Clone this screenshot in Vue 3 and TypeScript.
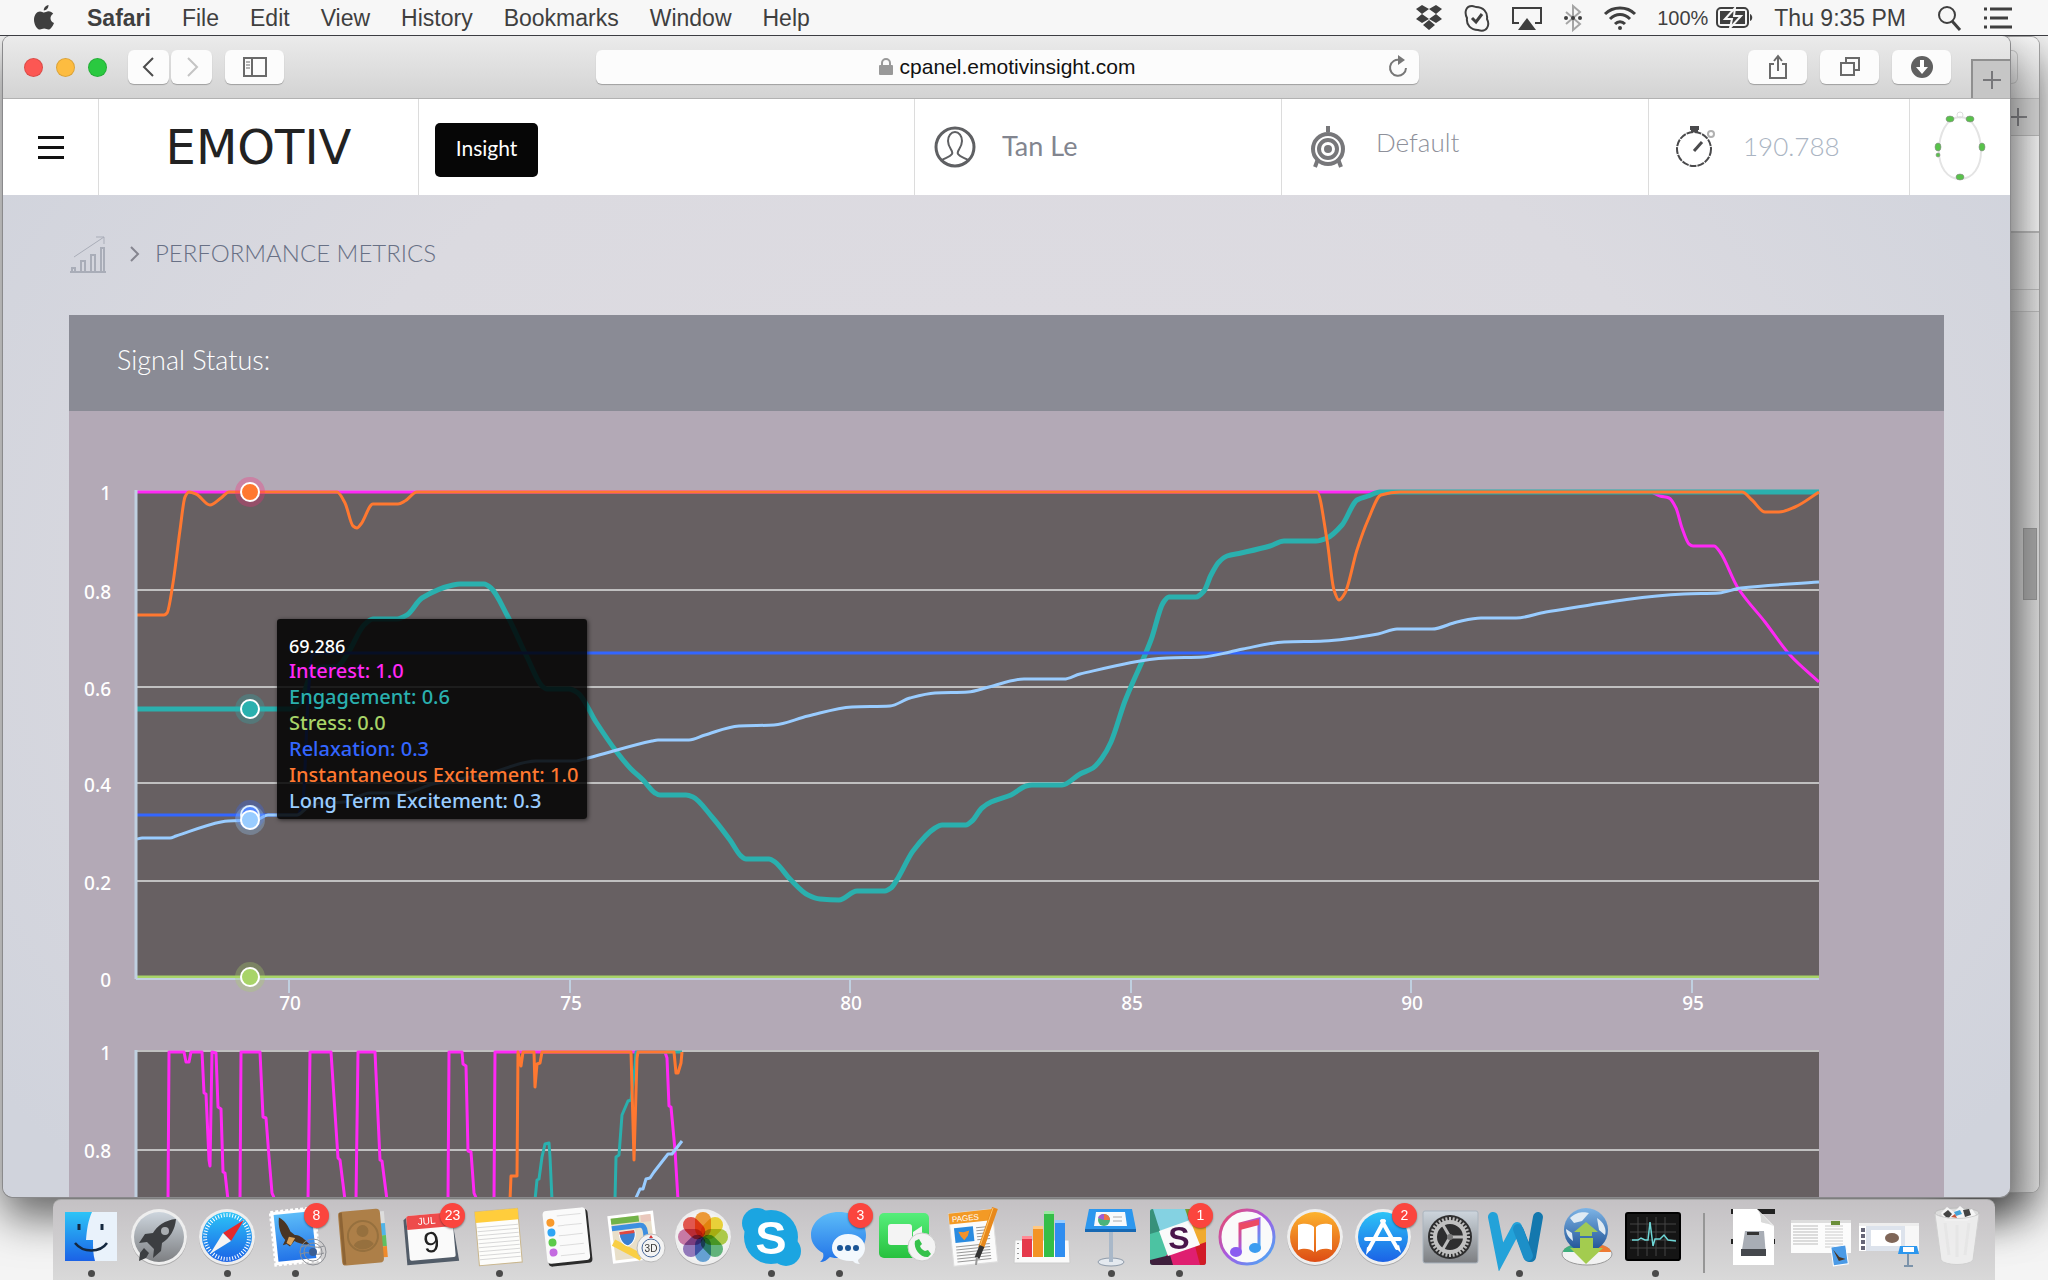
<script setup lang="ts">
type Point = [number, number]

interface DockItem {
  name: string
  art: string
  badge?: number
  running?: boolean
}

const menus = ['File', 'Edit', 'View', 'History', 'Bookmarks', 'Window', 'Help']

const readings = [
  { label: 'Interest', value: '1.0', color: '#ff28f5' },
  { label: 'Engagement', value: '0.6', color: '#2ab0ae' },
  { label: 'Stress', value: '0.0', color: '#a8d468' },
  { label: 'Relaxation', value: '0.3', color: '#3366ff' },
  { label: 'Instantaneous Excitement', value: '1.0', color: '#ff7830' },
  { label: 'Long Term Excitement', value: '0.3', color: '#99ccff' },
]

const gridLabels = [
  { text: '1', y: 491 },
  { text: '0.8', y: 590 },
  { text: '0.6', y: 687 },
  { text: '0.4', y: 783 },
  { text: '0.2', y: 881 },
  { text: '0', y: 978 },
]

const ticks = [
  { text: '70', x: 289 },
  { text: '75', x: 570 },
  { text: '80', x: 850 },
  { text: '85', x: 1131 },
  { text: '90', x: 1411 },
  { text: '95', x: 1692 },
]

const interest: Point[] = [
  [137, 492], [1650, 492], [1660, 496], [1669, 498], [1676, 508], [1682, 528], [1689, 544], [1693, 546],
  [1714, 546], [1720, 552], [1738, 588], [1765, 622], [1790, 655], [1819, 682],
]

const engagement: Point[] = [
  [137, 709], [290, 709], [300, 703], [312, 672], [324, 667], [336, 667], [348, 653], [364, 625], [373, 619],
  [397, 619], [407, 615], [422, 598], [453, 585], [460, 584], [484, 584], [491, 588], [507, 615], [527, 657],
  [542, 686], [547, 689], [569, 689], [578, 693], [596, 722], [616, 751], [631, 769], [643, 780], [655, 793],
  [660, 795], [686, 795], [693, 797], [712, 817], [730, 840], [741, 856], [746, 859], [769, 859], [775, 862],
  [790, 879], [808, 895], [820, 899], [839, 900], [857, 891], [885, 891], [891, 888], [898, 878], [913, 851],
  [935, 828], [942, 825], [966, 825], [972, 821], [982, 808], [991, 802], [1011, 795], [1026, 786], [1032, 785],
  [1062, 785], [1080, 774], [1093, 768], [1102, 758], [1111, 742], [1125, 701], [1151, 640], [1163, 603],
  [1169, 597], [1196, 597], [1204, 591], [1211, 575], [1219, 562], [1227, 556], [1241, 553], [1270, 546],
  [1284, 541], [1290, 541], [1316, 541], [1327, 538], [1342, 525], [1357, 500], [1368, 496], [1380, 492], [1819, 492],
]

const relaxation: Point[] = [
  [137, 815], [297, 815], [303, 800], [308, 700], [312, 655], [318, 653], [1819, 653],
]

const instant: Point[] = [
  [137, 615], [164, 615], [167, 613], [173, 583], [180, 530], [185, 497], [189, 492], [196, 494], [210, 505],
  [221, 498], [229, 492], [337, 492], [345, 503], [353, 526], [357, 528], [361, 524], [373, 504], [398, 504],
  [405, 501], [417, 492], [1317, 492], [1327, 540], [1334, 590], [1339, 600], [1345, 593], [1357, 550],
  [1368, 520], [1381, 495], [1400, 492], [1742, 492], [1752, 500], [1765, 512], [1779, 512], [1795, 507], [1819, 492],
]

const longTerm: Point[] = [
  [137, 839], [142, 838], [170, 838], [176, 836], [221, 822], [228, 821], [256, 820], [268, 815], [297, 815],
  [308, 807], [321, 803], [344, 802], [370, 793], [404, 793], [433, 784], [487, 774], [536, 761], [544, 761],
  [575, 761], [588, 758], [652, 741], [658, 740], [689, 740], [705, 735], [739, 726], [774, 725], [808, 716],
  [852, 707], [890, 706], [910, 698], [935, 693], [968, 692], [989, 687], [1024, 679], [1064, 679], [1080, 674],
  [1167, 658], [1203, 657], [1230, 652], [1243, 649], [1284, 642], [1324, 641], [1378, 634], [1397, 629],
  [1432, 629], [1457, 622], [1481, 618], [1516, 618], [1546, 612], [1684, 594], [1719, 593], [1741, 588], [1819, 582],
]

// Monotone cubic interpolation: smooth curves that keep the flat runs flat.
function smooth(points: Point[]): string {
  const n = points.length
  const slope: number[] = []
  for (let i = 0; i < n - 1; i++) {
    slope.push((points[i + 1][1] - points[i][1]) / (points[i + 1][0] - points[i][0]))
  }
  const tangent = points.map((_, i) => {
    if (i === 0) return slope[0]
    if (i === n - 1) return slope[n - 2]
    const a = slope[i - 1]
    const b = slope[i]
    return a * b <= 0 ? 0 : (2 * a * b) / (a + b)
  })
  let d = `M${points[0][0]},${points[0][1]}`
  for (let i = 0; i < n - 1; i++) {
    const [x0, y0] = points[i]
    const [x1, y1] = points[i + 1]
    const h = (x1 - x0) / 3
    d += `C${x0 + h},${y0 + tangent[i] * h} ${x1 - h},${y1 - tangent[i + 1] * h} ${x1},${y1}`
  }
  return d
}

const series = [
  { color: '#ff28f5', width: 3, d: smooth(interest) },
  { color: '#2ab0ae', width: 5, d: smooth(engagement) },
  { color: '#a8d468', width: 3, d: 'M137,977H1819' },
  { color: '#3366ff', width: 3, d: smooth(relaxation) },
  { color: '#ff7830', width: 3, d: smooth(instant) },
  { color: '#99ccff', width: 3, d: smooth(longTerm) },
]

const markers = [
  { y: 492, color: '#ff7830', halo: '#ff287a' },
  { y: 709, color: '#2ab0ae', halo: '#2ab0ae' },
  { y: 977, color: '#a8d468', halo: '#a8d468' },
  { y: 815, color: '#3366ff', halo: '#3366ff' },
  { y: 820, color: '#99ccff', halo: '#99ccff' },
]

const overview = [
  {
    color: '#ff28f5',
    lines: [
      '168,1200 169,1052 184,1052 186,1062 189,1062 191,1052 202,1052 204,1093 206,1094 209,1160 210,1166 212,1052 216,1053 218,1107 221,1109 223,1172 225,1173 228,1200',
      '240,1200 241,1052 260,1052 263,1117 266,1118 269,1157 272,1193 275,1200',
      '308,1200 310,1052 331,1052 338,1158 340,1160 345,1200',
      '356,1200 358,1052 375,1052 380,1160 382,1161 387,1200',
      '448,1200 449,1052 462,1052 463,1064 466,1066 468,1151 471,1152 474,1193 477,1200',
      '494,1200 495,1052 665,1052 667,1058 669,1106 671,1107 675,1150 678,1200',
    ],
  },
  {
    color: '#2ab0ae',
    lines: [
      '535,1200 537,1180 539,1179 542,1157 545,1144 549,1143 550,1157 552,1200',
      '615,1200 616,1157 619,1155 622,1115 628,1101 631,1100 635,1067 636,1052 682,1052',
    ],
  },
  {
    color: '#ff7830',
    lines: [
      '510,1200 511,1176 517,1176 518,1052 521,1066 523,1052 534,1052 535,1087 537,1064 540,1063 542,1052 631,1052 634,1160 637,1058 638,1052 674,1052 676,1073 678,1073 681,1063 682,1052',
    ],
  },
  {
    color: '#99ccff',
    lines: ['635,1200 640,1189 643,1189 646,1179 650,1178 654,1172 668,1154 672,1154 682,1141'],
  },
]

const disc = (fill: string) =>
  `<circle cx="34" cy="35" r="28" fill="#0003"/><circle cx="34" cy="34" r="28" fill="#eee"/><circle cx="34" cy="34" r="25" fill="${fill}"/>`

const rays = (count: number, from: number, to: number, attrs: string) =>
  Array.from(
    { length: count },
    (_, i) => `<path d="M34 ${from}V${to}" ${attrs} transform="rotate(${(i * 360) / count} 34 34)"/>`,
  ).join('')

const petals = ['#f9a13a', '#f5dc3c', '#b5d44c', '#67bd82', '#6aa9de', '#9a7fc4', '#d27fae', '#ee5b52']
  .map((c, i) => `<rect x="26" y="9" width="16" height="25" rx="8" fill="${c}" style="mix-blend-mode:multiply" transform="rotate(${i * 45} 34 34)"/>`)
  .join('')

const ruled = (x: number, y: number, w: number, n: number, gap: number, color: string) =>
  Array.from({ length: n }, (_, i) => `<path d="M${x} ${y + i * gap}h${w}" stroke="${color}"/>`).join('')

const eagle =
  '<path d="M20 13c6 4 8 9 10 15l4 4c5 0 9 5 14 11-7 0-12-3-15-5l-5 5-3-3-4 1 3-5c-4-5-6-13-4-23z" fill="#4a3523"/><path d="M28 33l6 2-5 7-4-3z" fill="#dba35c"/>'

const dockApps: DockItem[] = [
  {
    name: 'Finder',
    running: true,
    art: '<rect x="8" y="9" width="52" height="49" fill="#e9f2fb"/><path d="M8 9h27c-4 9-5 17-6 28h7c0 8 0 14 2 21H8z" fill="url(#blue)"/><path d="M22 21v6M45 21v6" stroke="#14283f" stroke-width="3"/><path d="M18 40c8 10 25 10 32 0" fill="none" stroke="#14283f" stroke-width="2.5"/>',
  },
  {
    name: 'Launchpad',
    art: disc('url(#steel)') + '<path d="M51 16c-11 1-19 7-23 14l-8 1-6 9 8-1 7 7-1 9 8-7 1-8c8-5 13-13 14-24zM19 45l5 5-3 5-7 3 1-8z" fill="#3c3e41"/><circle cx="40" cy="28" r="4" fill="#a9adb1"/>',
  },
  {
    name: 'Safari',
    running: true,
    art: disc('url(#blue)') + rays(48, 10, 14, 'stroke="#fff"') + '<path d="M51 17L30 30l8 8z" fill="#e5292b"/><path d="M17 51l13-21 8 8z" fill="#f4f4f4"/>',
  },
  {
    name: 'Mail',
    badge: 8,
    running: true,
    art: '<g transform="rotate(-6 34 34)"><rect x="12" y="7" width="44" height="53" fill="#fff" stroke="#fff" stroke-width="3" stroke-dasharray="3 2"/><rect x="15" y="10" width="38" height="47" fill="url(#sky)"/>' + eagle + '</g><g fill="none" stroke="#8d8f94"><circle cx="52" cy="49" r="13"/><circle cx="52" cy="49" r="9"/><path d="M40 44c8-4 14 3 23-1M40 51c8-4 14 3 23-1"/></g><circle cx="52" cy="49" r="4" fill="#3a5e94"/>',
  },
  {
    name: 'Contacts',
    art: '<g transform="rotate(-5 34 34)"><path d="M52 10h5v12h-5z" fill="#ddd"/><path d="M52 22h5v12h-5z" fill="#4fb4e8"/><path d="M52 34h5v11h-5z" fill="#5fbf60"/><path d="M52 45h5v11h-5z" fill="#f08a2a"/><rect x="11" y="7" width="42" height="54" rx="4" fill="#ad7f48"/><path d="M12 8v52h3V8z" fill="#8d6435"/><circle cx="34" cy="33" r="15" fill="none" stroke="#96703e" stroke-width="2"/><circle cx="34" cy="28" r="6" fill="#96703e"/><path d="M24 42c2-7 18-7 20 0-5 6-15 6-20 0z" fill="#96703e"/></g>',
  },
  {
    name: 'Calendar',
    badge: 23,
    art: '<g transform="rotate(-5 34 34)"><path d="M8 15l4-3h44l4 48H8z" fill="#525c68"/><rect x="11" y="11" width="46" height="45" rx="2" fill="#fafafa"/><path d="M11 13a2 2 0 012-2h42a2 2 0 012 2v12H11z" fill="#ee4b4b"/></g><text x="31" y="21" font-size="10" fill="#fff" text-anchor="middle" transform="rotate(-5 34 34)">JUL</text><text x="34" y="49" font-size="29" fill="#222" text-anchor="middle" transform="rotate(-5 34 34)">9</text>',
  },
  {
    name: 'Notes',
    running: true,
    art: '<g transform="rotate(-5 34 34)"><rect x="12" y="7" width="43" height="54" fill="#fdfdfb" stroke="#c9b68d"/><rect x="12" y="7" width="43" height="11" fill="#ffcd3c"/>' + ruled(13, 23, 41, 9, 4, '#d8d8d8') + '</g>',
  },
  {
    name: 'Reminders',
    art: '<g transform="rotate(-6 34 34)"><rect x="13" y="8" width="44" height="54" rx="4" fill="#2b2b2b"/><rect x="12" y="6" width="43" height="53" rx="4" fill="#fafafa"/><circle cx="19" cy="18" r="4" fill="#f99a2c"/><circle cx="19" cy="28" r="4" fill="#2ea5f5"/><circle cx="19" cy="38" r="4" fill="#5ccb4a"/><circle cx="19" cy="48" r="4" fill="#c46be0"/>' + ruled(26, 12, 24, 5, 10, '#ddd') + '</g>',
  },
  {
    name: 'Maps',
    art: '<g transform="rotate(-7 34 34)"><rect x="9" y="10" width="46" height="48" fill="#fff"/><rect x="12" y="13" width="40" height="42" fill="#e8dfc9"/><path d="M12 13h28v6H12z" fill="#71b348"/><path d="M42 13h10v7H42z" fill="#eac8bd"/><path d="M12 23h28c4 0 5 4 5 8v24" fill="none" stroke="#3d8fe0" stroke-width="5"/><path d="M12 37l26 18" stroke="#f9cf45" stroke-width="7"/><path d="M19 27h15c2 5-1 13-8 15-6-2-8-9-7-15z" fill="#3a7fd0" stroke="#fff"/><path d="M19 27h15v3H19z" fill="#e0483e"/></g><circle cx="50" cy="45" r="14" fill="#f3f3f3" stroke="#bbb"/><circle cx="50" cy="45" r="9" fill="none" stroke="#47689a"/><text x="50" y="49" font-size="10" fill="#333" text-anchor="middle">3D</text><path d="M48 35l2-3 2 3z" fill="#d33"/>',
  },
  { name: 'Photos', art: disc('#f2f2f2') + petals },
  {
    name: 'Skype',
    running: true,
    art: '<circle cx="34" cy="34" r="27" fill="#1ba5e1"/><circle cx="20" cy="20" r="15" fill="#1ba5e1"/><circle cx="49" cy="48" r="15" fill="#1ba5e1"/><text x="34" y="51" font-size="47" font-weight="700" fill="#fff" text-anchor="middle">S</text>',
  },
  {
    name: 'Messages',
    badge: 3,
    running: true,
    art: '<path d="M34 9c16 0 27 10 27 23S50 55 34 55c-3 0-6 0-9-1-3 3-6 5-10 5 3-3 4-5 3-9C11 46 6 40 6 32 6 19 18 9 34 9z" fill="url(#sky)"/><path d="M43 31c10 0 17 6 17 14 0 5-3 9-7 12 0 2 1 3 2 4-3 0-6-1-7-3-12 1-21-5-21-13s7-14 16-14z" fill="#f3f8fd"/><g fill="#1b5596"><circle cx="35" cy="45" r="3"/><circle cx="43" cy="45" r="3"/><circle cx="51" cy="45" r="3"/></g>',
  },
  {
    name: 'FaceTime',
    art: '<rect x="6" y="10" width="50" height="45" rx="5" fill="url(#green)"/><rect x="15" y="21" width="24" height="21" rx="3" fill="#f4f4f4"/><path d="M40 29l9-6v17l-9-6z" fill="#f4f4f4"/><circle cx="49" cy="44" r="14" fill="#f3f3f3" stroke="#ccc"/><path d="M42 38l4-2 3 5-2 2c1 3 3 4 5 5l3-1 3 4-3 3c-7 1-15-8-13-16z" fill="#35c24b"/>',
  },
  {
    name: 'Pages',
    art: '<g transform="rotate(-6 34 34)"><rect x="10" y="8" width="44" height="53" fill="#fbfbfb" stroke="#ddd"/><rect x="10" y="8" width="44" height="11" fill="#f39a25"/><rect x="14" y="23" width="19" height="15" fill="#2a8be0"/><path d="M18 27l5 1 6-1-2 5-4 4-3-4z" fill="#f3922b"/>' + ruled(36, 25, 13, 5, 3, '#999') + ruled(14, 42, 34, 6, 3, '#999') + '<text x="13" y="17" font-size="8" fill="#fff">PAGES</text></g><path d="M54 5l-14 40" stroke="#e8891c" stroke-width="6"/><path d="M52 5l-13 38" stroke="#ffc567"/><path d="M41 43l-5 12" stroke="#333" stroke-width="5"/><path d="M36 54l-1 8" stroke="#999" stroke-width="2"/>',
  },
  {
    name: 'Numbers',
    art: '<path d="M6 37h54l1 23H5z" fill="#fafafa" stroke="#ccc"/><path d="M9 40v17" stroke="#999" stroke-width="2" stroke-dasharray="1 4"/><rect x="13" y="35" width="10" height="19" fill="#e5394b"/><rect x="13" y="33" width="10" height="3" fill="#ff8b95"/><rect x="24" y="25" width="10" height="29" fill="#f39325"/><rect x="24" y="23" width="10" height="3" fill="#ffc983"/><rect x="35" y="10" width="10" height="44" fill="#35be47"/><rect x="35" y="8" width="10" height="3" fill="#9ce8a3"/><rect x="46" y="19" width="10" height="35" fill="#2f8df0"/><rect x="46" y="17" width="10" height="3" fill="#98ccff"/>',
  },
  {
    name: 'Keynote',
    running: true,
    art: '<ellipse cx="34" cy="59" rx="13" ry="4" fill="#e4e9ef" stroke="#8d99a8"/><path d="M34 28v31" stroke="#a9b8c9" stroke-width="4"/><path d="M12 6h43l4 20H8z" fill="#2c97ee"/><path d="M8 26h51v3H8z" fill="#1668b3"/><path d="M19 9h29l2 14H17z" fill="#f7f9fb"/><circle cx="27" cy="17" r="6" fill="#4bb37b"/><path d="M27 17v-6a6 6 0 016 6z" fill="#ee7446"/><path d="M27 17l-6-2a6 6 0 016-4z" fill="#a65bd0"/><path d="M36 14h9M36 18h9" stroke="#aaa"/>',
  },
  {
    name: 'Slack',
    badge: 1,
    running: true,
    art: '<clipPath id="slackClip"><rect x="5" y="6" width="56" height="56" rx="3"/></clipPath><g clip-path="url(#slackClip)"><path d="M5 6h56v56H5z" fill="#4cc3a2"/><path d="M6 6h36l5 12-32 10z" fill="#84d2e2"/><path d="M5 6h3l7 22-10 3z" fill="#37917a"/><path d="M40 6h21v10l-16 4z" fill="#7c9a2d"/><path d="M45 19l16-5v30l-8 2z" fill="#f0aa2e"/><path d="M21 52l32-11 8 21H26z" fill="#df1f70"/><path d="M50 43l11-4v23h-6z" fill="#d11b26"/><path d="M5 57l20-5 3 10H5z" fill="#3e1f3c"/><path d="M14 28l31-11 10 25-32 11z" fill="#fafafa"/></g><text x="34" y="46" font-size="32" font-weight="700" fill="#4a154b" text-anchor="middle">S</text>',
  },
  {
    name: 'iTunes',
    art: '<circle cx="34" cy="34" r="27" fill="#fafafa" stroke="url(#music)" stroke-width="3"/><path d="M27 49V21l19-5v30" fill="none" stroke="url(#music)" stroke-width="3"/><path d="M27 21l19-5v6l-19 5z" fill="#ec4a63"/><ellipse cx="23" cy="49" rx="6" ry="5" fill="#8a5cf0"/><ellipse cx="42" cy="45" rx="6" ry="5" fill="#3c9cf0"/>',
  },
  {
    name: 'iBooks',
    art: disc('url(#orange)') + '<path d="M33 24c-4-4-11-4-16-2v25c5-2 12-2 16 2zM35 24c4-4 11-4 16-2v25c-5-2-12-2-16 2z" fill="#fff"/>',
  },
  {
    name: 'App Store',
    badge: 2,
    art: disc('url(#blue)') + '<g fill="none" stroke="#fff" stroke-width="4" stroke-linecap="round"><path d="M17 36h34M35 18L20 46M33 18l15 27"/></g><path d="M18 44l4 2-5 6zM46 44l4-2 2 8z" fill="#fff"/>',
  },
  {
    name: 'System Preferences',
    art: '<rect x="6" y="8" width="55" height="52" rx="2" fill="url(#steel)" stroke="#aab4be"/><circle cx="33" cy="34" r="22" fill="#2e2e2f"/><g transform="translate(-1 0)">' + rays(32, 14, 18, 'stroke="#bbb" stroke-width="2"') + '<g transform="rotate(90 34 34)">' + rays(3, 20, 34, 'stroke="#bbb" stroke-width="3"') + '</g></g><circle cx="33" cy="34" r="15" fill="none" stroke="#c0c0c0" stroke-width="4"/><circle cx="33" cy="34" r="3" fill="#777"/>',
  },
  {
    name: 'Word',
    running: true,
    art: '<g fill="none" stroke-linecap="round" stroke-width="10"><path d="M34 28l10 26M53 14l-7 40" stroke="#1478ae"/><path d="M8 14l8 40 16-30" stroke="#23a2d9"/><path d="M33 26l10 27" stroke="#1c8fc8"/></g>',
  },
  {
    name: 'Downloader',
    art: '<ellipse cx="34" cy="51" rx="25" ry="11" fill="#f2f2f2" stroke="#999"/><path d="M10 49a24 9 0 0124-9v9z" fill="#3fae7c"/><path d="M58 49a24 9 0 00-24-9v9z" fill="#ee7a33"/><circle cx="33" cy="27" r="22" fill="url(#globe)"/><path d="M17 15c7-7 15-6 19-5l-7 8-8 2zM44 15c7 4 10 12 8 17l-6-5zM13 26l6 4 1 8c-4-3-7-7-7-12z" fill="#dfeaf3"/><path d="M33 19l12 10h-6v4H27v-4h-6z" fill="#9fc956"/><path d="M27 35h13v10h10L33 61 17 45h10z" fill="#a3cc4f"/>',
  },
  {
    name: 'Activity Monitor',
    running: true,
    art: '<rect x="5" y="10" width="54" height="47" rx="2" fill="#151515" stroke="#000" stroke-width="2"/><path d="M17 14v39M26 14v39M35 14v39M44 14v39M9 21h46M9 29h46M9 37h46M9 45h46" stroke="#444"/><path d="M11 37h6l3-2 4 2h3l2-18 3 24 2-7h5l4-4 4 5 8 1" fill="none" stroke="#6ed6d6" stroke-width="1.5"/>',
  },
]

const dockFiles: DockItem[] = [
  {
    name: 'Disk document',
    art: '<path d="M12 6h44v5H12zM12 36h44v5H12z" fill="#222"/><path d="M14 6h24l17 17v39H14z" fill="#fff"/><path d="M38 6l17 18c-4-4-9-3-13-5 0-6-1-9-4-13z" fill="#dadada"/><path d="M26 28h19l2 25H22z" fill="#a8adb5"/><path d="M28 29h12v3H28z" fill="#333"/><path d="M22 46h25v7H22z" fill="#45484d"/>',
  },
  {
    name: 'Minimised mail window',
    art: '<rect x="4" y="17" width="60" height="33" fill="#fcfcfc"/><path d="M4 17h60v3H4z" fill="#ddd"/>' + ruled(6, 23, 25, 7, 3, '#bbb') + ruled(38, 23, 18, 8, 3, '#ccc') + '<rect x="44" y="18" width="9" height="4" fill="#6b8f3a"/><g transform="rotate(-8 52 52)"><rect x="45" y="43" width="15" height="19" fill="#4a9ae6" stroke="#fff"/><path d="M47 46l5 8 6 3-7 1z" fill="#4a3523"/></g>',
  },
  {
    name: 'Minimised slides window',
    art: '<rect x="4" y="20" width="60" height="28" fill="#dde3ec"/><path d="M4 20h60v3H4z" fill="#eee"/><rect x="4" y="23" width="7" height="25" fill="#fff"/><path d="M8 25v22" stroke="#667" stroke-width="4" stroke-dasharray="4 2"/><rect x="16" y="27" width="30" height="16" fill="#fff"/><ellipse cx="37" cy="35" rx="7" ry="5" fill="#7f6658"/><rect x="50" y="23" width="14" height="25" fill="#f7f7f7"/><path d="M45 43h17l2 8H43z" fill="#2c97ee"/><path d="M48 44h11v5H48z" fill="#fff"/><path d="M53 51v11M49 63h9" stroke="#7c93aa" stroke-width="2"/>',
  },
  {
    name: 'Trash',
    art: '<ellipse cx="34" cy="10" rx="22" ry="5" fill="#dcdcdc" stroke="#bbb"/><path d="M18 10l6-6 7 5 6-6 6 5 6-2 4 6-9 6H22z" fill="#f5f5f5"/><path d="M20 11l5-4 4 4-4 5zM40 7l6-1 2 6-6 2z" fill="#444"/><path d="M31 9l6-2 2 4-6 2z" fill="#45a3d8"/><path d="M28 14l4-3 2 4z" fill="#c9543a"/><path d="M12 11c10 6 34 6 44 0l-6 46c-4 6-28 6-32 0z" fill="#f0f0f0e6" stroke="#cfcfcf"/><path d="M22 20l4 32M34 22v32M46 20l-4 32" stroke="#e6e6e6" stroke-width="3"/>',
  },
]
</script>

<template>
  <div class="desktop">
    <header class="menubar">
      <nav class="menus" aria-label="Menu bar">
        <button type="button" aria-label="Apple">
          <svg width="24" height="28" viewBox="0 0 24 28" fill="#3f3f3f">
            <path d="M16.500 1c.2 2.600-2 5.500-4.700 5.500C11.400 4 13.800 1.300 16.500 1z" />
            <path d="M12 8.500c1.200 0 2.500-1.300 4.600-1.300 1.800 0 3.600 1 4.600 2.500-4 2.300-3.300 7.700.8 9.300-1 2.800-3.300 6.600-5.600 6.600-1.600 0-2.200-1-4.200-1-2 0-2.700 1-4.200 1C5 25.600 2 20.300 2 15.700c0-5 3-8.300 6-8.300 1.800 0 3 1.100 4 1.100z" />
          </svg>
        </button>
        <button type="button" class="app-name">Safari</button>
        <button v-for="m in menus" :key="m" type="button">{{ m }}</button>
      </nav>
      <div class="status">
        <svg width="28" height="28" viewBox="0 0 28 28" fill="#3f3f3f">
          <path d="M7 1l7 4-7 5-6-5zM21 1l6 4-6 5-7-5zM7 10l7 5-7 4-6-4zM21 10l6 5-6 4-7-4zM8 21l6-5 6 5-6 5z" />
        </svg>
        <svg width="28" height="28" viewBox="0 0 28 28" fill="none" stroke="#3f3f3f" stroke-width="2">
          <path d="M9 2c2 0 3 1 4 1 7 0 12 5 11 12 2 4 2 6 0 9s-6 3-9 2C8 26 3 21 4 14 1 8 3 2 9 2z" />
          <path d="M9 14l4 4 6-8" stroke-width="3" />
        </svg>
        <svg width="32" height="28" viewBox="0 0 32 28">
          <path d="M8 19H2V4h28v15h-6" fill="none" stroke="#3f3f3f" stroke-width="2" />
          <path d="M16 14l9 12H7z" fill="#3f3f3f" />
        </svg>
        <svg width="20" height="28" viewBox="0 0 20 28">
          <path d="M3 8l14 12-7 6V2l7 6L3 20" fill="none" stroke="#a5a5a5" stroke-width="2" />
          <circle cx="3" cy="14" r="2" fill="#3f3f3f" /><circle cx="10" cy="14" r="2" fill="#3f3f3f" /><circle cx="17" cy="14" r="2" fill="#3f3f3f" />
        </svg>
        <svg width="34" height="28" viewBox="0 0 34 28" fill="none" stroke="#3f3f3f" stroke-width="3">
          <path d="M2 10c8-8 22-8 30 0M7 15c6-6 14-6 20 0M12 20c3-3 7-3 10 0" />
          <circle cx="17" cy="24" r="2" fill="#3f3f3f" stroke="none" />
        </svg>
        <span class="battery">
          <span class="percent">100%</span>
          <svg width="38" height="24" viewBox="0 0 38 24">
            <rect x="1" y="2" width="31" height="19" rx="4" fill="none" stroke="#3f3f3f" stroke-width="2" />
            <rect x="4" y="5" width="25" height="13" fill="#3f3f3f" />
            <path d="M34 8c3 1 3 6 0 7z" fill="#3f3f3f" />
            <path d="M19 2L9 13h7l-2 9 11-12h-7z" fill="#3f3f3f" stroke="#f7f7f7" stroke-width="2" />
          </svg>
        </span>
        <time class="clock">Thu 9:35 PM</time>
        <svg width="26" height="28" viewBox="0 0 26 28" fill="none" stroke="#3f3f3f" stroke-width="2">
          <circle cx="11" cy="11" r="8" /><path d="M16 17l8 9" stroke-width="3" />
        </svg>
        <svg width="32" height="28" viewBox="0 0 32 28" stroke="#3f3f3f" stroke-width="3">
          <path d="M8 5h22M8 14h18M8 23h22M2 5h3M2 14h3M2 23h3" />
        </svg>
      </div>
    </header>

    <div class="stage">
      <div class="back-window" aria-hidden="true">
        <div class="back-toolbar"><i></i></div>
        <div class="back-tabs">
          <svg width="24" height="24" viewBox="0 0 24 24" stroke="#808084" stroke-width="2"><path d="M12 3v18M3 12h18" /></svg>
        </div>
        <div class="back-page"></div>
        <div class="back-bar"></div>
        <div class="back-bar short"></div>
        <div class="back-body"><i></i></div>
      </div>

      <main class="window">
        <div class="toolbar">
          <div class="lights">
            <button type="button" class="light red" aria-label="Close"></button>
            <button type="button" class="light amber" aria-label="Minimise"></button>
            <button type="button" class="light green" aria-label="Zoom"></button>
          </div>
          <div class="history">
            <button type="button" class="tool narrow" aria-label="Back">
              <svg width="24" height="24" viewBox="0 0 24 24" fill="none" stroke="#4c4c4c" stroke-width="2"><path d="M16 3l-9 9 9 9" /></svg>
            </button>
            <button type="button" class="tool narrow" aria-label="Forward">
              <svg width="24" height="24" viewBox="0 0 24 24" fill="none" stroke="#c4c4c4" stroke-width="2"><path d="M8 3l9 9-9 9" /></svg>
            </button>
          </div>
          <button type="button" class="tool" aria-label="Sidebar">
            <svg width="26" height="22" viewBox="0 0 26 22" fill="none" stroke="#6a6a6a" stroke-width="2">
              <path d="M2 2h22v18H2zM10 2v18" /><path d="M4 6h4M4 9h4M4 12h4" stroke-width="1" />
            </svg>
          </button>
          <div class="address">
            <span class="url">
              <svg width="14" height="18" viewBox="0 0 14 18"><rect y="7" width="14" height="10" rx="1" fill="#999" /><path d="M3 8V5a4 4 0 018 0v3" fill="none" stroke="#999" stroke-width="2" /></svg>
              <a href="#">cpanel.emotivinsight.com</a>
            </span>
            <button type="button" class="reload" aria-label="Reload">
              <svg width="22" height="24" viewBox="0 0 22 24" fill="none" stroke="#777" stroke-width="2"><path d="M13 5a8 8 0 106 8" /><path d="M11 0l7 5-7 5z" fill="#777" stroke="none" /></svg>
            </button>
          </div>
          <div class="actions">
            <button type="button" class="tool" aria-label="Share">
              <svg width="24" height="26" viewBox="0 0 24 26" fill="none" stroke="#6a6a6a" stroke-width="2"><path d="M8 10H4v14h16V10h-4M12 17V3M8 7l4-5 4 5" /></svg>
            </button>
            <button type="button" class="tool" aria-label="Tabs">
              <svg width="24" height="24" viewBox="0 0 24 24" fill="none" stroke="#6a6a6a" stroke-width="2"><path d="M3 8h13v12H3zM8 8V3h13v12h-5" /></svg>
            </button>
            <button type="button" class="tool" aria-label="Downloads">
              <svg width="24" height="24" viewBox="0 0 24 24"><circle cx="12" cy="12" r="11" fill="#606060" /><path d="M10 5h4v7h4l-6 7-6-7h4z" fill="#fff" /></svg>
            </button>
          </div>
          <button type="button" class="new-tab" aria-label="New tab">
            <svg width="24" height="24" viewBox="0 0 24 24" stroke="#77777a" stroke-width="2"><path d="M12 3v18M3 12h18" /></svg>
          </button>
        </div>

        <div class="app-header">
          <button type="button" class="cell burger" aria-label="Menu"><i></i><i></i><i></i></button>
          <a class="cell brand" href="#">EMOTIV</a>
          <div class="cell product"><button type="button">Insight</button></div>
          <div class="cell user">
            <svg width="42" height="42" viewBox="0 0 42 42" fill="none" stroke="#5f6063" stroke-width="3">
              <circle cx="21" cy="21" r="19" />
              <path d="M8 34c3-2 8-3 10-6 2-3-4-6-4-13 0-5 3-9 7-9s7 4 7 9c0 7-6 10-4 13 2 3 7 4 10 6" stroke-width="2" />
            </svg>
            <span>Tan Le</span>
          </div>
          <div class="cell profile">
            <svg width="36" height="44" viewBox="0 0 36 44" fill="none" stroke="#77777a">
              <path d="M18 1v6M8 34l-3 8M28 34l3 8" stroke-width="4" />
              <circle cx="18" cy="24" r="15" stroke-width="4" /><circle cx="18" cy="24" r="9" stroke-width="4" /><circle cx="18" cy="24" r="4" fill="#77777a" stroke="none" />
            </svg>
            <span>Default</span>
          </div>
          <div class="cell timer">
            <svg width="42" height="42" viewBox="0 0 42 42" fill="none" stroke="#4a4a4c" stroke-width="2">
              <circle cx="19" cy="23" r="17" stroke-dasharray="7 1" /><path d="M15 2h9M16 4h7" stroke-width="4" /><path d="M19 25l8-9" stroke-width="3" />
              <circle cx="36" cy="8" r="3" stroke="#b0b0b0" />
            </svg>
            <span>190.788</span>
          </div>
          <div class="cell sensors">
            <svg width="52" height="72" viewBox="0 0 52 72">
              <path d="M26 6C12 6 5 24 5 40s8 28 21 28 21-12 21-28S40 6 26 6z" fill="none" stroke="#e4e4e4" stroke-width="2" />
              <circle cx="26" cy="4" r="3" fill="none" stroke="#ddd" />
              <g fill="#58c24a" stroke="#8a8a8a" stroke-opacity=".6"><ellipse cx="16" cy="8" rx="4" ry="3" /><ellipse cx="36" cy="8" rx="4" ry="3" /><ellipse cx="4" cy="36" rx="3" ry="4" /><circle cx="4" cy="44" r="2" /><ellipse cx="48" cy="36" rx="3" ry="4" /><ellipse cx="26" cy="66" rx="4" ry="3" /></g>
            </svg>
          </div>
        </div>

        <div class="page">
          <div class="crumbs">
            <svg width="38" height="38" viewBox="0 0 38 38" fill="none" stroke="#a9adb8" stroke-width="2">
              <path d="M1 37h36M3 36v-3h3v3M12 36V26h4v10M22 36V20h4v16M32 36V13h3v23" /><path d="M5 22L35 2M27 2h8v7" stroke-width="1" />
            </svg>
            <svg width="12" height="18" viewBox="0 0 12 18" fill="none" stroke="#85858f" stroke-width="2"><path d="M2 2l7 7-7 7" /></svg>
            <h1>PERFORMANCE METRICS</h1>
          </div>

          <section class="panel">
            <h2>Signal Status:</h2>
            <div class="charts">
              <svg class="chart" viewBox="69 411 1875 789" role="img" aria-label="Performance metrics charts">
                <rect x="137" y="491" width="1682" height="487" fill="#676062" />
                <g stroke="#c0c0c0" stroke-width="2">
                  <path v-for="g in gridLabels" :key="g.text" :d="`M137,${g.y}H1819`" />
                </g>
                <path v-for="s in series" :key="s.color" :d="s.d" :stroke="s.color" :stroke-width="s.width" fill="none" stroke-linejoin="round" />
                <path d="M136,490V979" stroke="#c0d0e0" stroke-width="3" />
                <path d="M136,979H1819" stroke="#c0d0e0" stroke-width="2" />
                <g stroke="#c0d0e0" stroke-width="2">
                  <path v-for="t in ticks" :key="t.text" :d="`M${t.x},979v14`" />
                </g>
                <g v-for="m in markers" :key="m.y">
                  <circle cx="250" :cy="m.y" r="15" :fill="m.halo" opacity=".3" />
                  <circle cx="250" :cy="m.y" r="9" :fill="m.color" stroke="#fff" stroke-width="2" />
                </g>
                <g class="label" text-anchor="end">
                  <text v-for="g in gridLabels" :key="g.text" x="111" :y="g.y + 9">{{ g.text }}</text>
                </g>
                <g class="label" text-anchor="middle">
                  <text v-for="t in ticks" :key="t.text" :x="t.x + 1" y="1010">{{ t.text }}</text>
                </g>

                <rect x="137" y="1051" width="1682" height="160" fill="#676062" />
                <path d="M137,1051H1819M137,1150H1819" stroke="#c0c0c0" stroke-width="2" />
                <g v-for="o in overview" :key="o.color" fill="none" :stroke="o.color" stroke-width="3" stroke-linejoin="round">
                  <polyline v-for="l in o.lines" :key="l" :points="l" />
                </g>
                <path d="M136,1050V1211" stroke="#c0d0e0" stroke-width="3" />
                <g class="label" text-anchor="end">
                  <text x="111" y="1060">1</text>
                  <text x="111" y="1158">0.8</text>
                </g>
              </svg>
              <div class="tooltip" role="tooltip">
                <strong>69.286</strong>
                <span v-for="r in readings" :key="r.label" :style="{ color: r.color }">{{ r.label }}: {{ r.value }}</span>
              </div>
            </div>
          </section>
        </div>
      </main>
    </div>

    <svg class="defs" width="0" height="0" aria-hidden="true">
      <linearGradient id="blue" x2="0" y2="1"><stop stop-color="#2cc4f7" /><stop offset="1" stop-color="#1b62e6" /></linearGradient>
      <linearGradient id="sky" x2="0" y2="1"><stop stop-color="#5cbcf8" /><stop offset="1" stop-color="#2273e8" /></linearGradient>
      <linearGradient id="globe" x2="0" y2="1"><stop stop-color="#7db4e6" /><stop offset="1" stop-color="#1d4f92" /></linearGradient>
      <linearGradient id="steel" x2="0" y2="1"><stop stop-color="#cdd5dd" /><stop offset="1" stop-color="#7d7f82" /></linearGradient>
      <linearGradient id="green" x2="0" y2="1"><stop stop-color="#56ee7b" /><stop offset="1" stop-color="#27c13e" /></linearGradient>
      <linearGradient id="orange" x2="0" y2="1"><stop stop-color="#fdb32d" /><stop offset="1" stop-color="#dd4c14" /></linearGradient>
      <linearGradient id="music" x2="1" y2="1"><stop stop-color="#f2475f" /><stop offset=".5" stop-color="#a35be6" /><stop offset="1" stop-color="#3cb4f7" /></linearGradient>
    </svg>

    <footer class="dock">
      <button v-for="a in dockApps" :key="a.name" type="button" class="dock-item" :aria-label="a.name">
        <svg width="68" height="68" viewBox="0 0 68 68" v-html="a.art"></svg>
        <span v-if="a.badge" class="badge">{{ a.badge }}</span>
        <i v-if="a.running" class="dot"></i>
      </button>
      <i class="divider"></i>
      <button v-for="f in dockFiles" :key="f.name" type="button" class="dock-item" :aria-label="f.name">
        <svg width="68" height="68" viewBox="0 0 68 68" v-html="f.art"></svg>
      </button>
    </footer>
  </div>
</template>

<style>
html,
body {
  margin: 0;
}
</style>

<style scoped>
* {
  box-sizing: border-box;
}

button {
  margin: 0;
  padding: 0;
  border: 0;
  background: none;
  color: inherit;
  font: inherit;
}

svg {
  display: block;
  flex: none;
}

.desktop {
  display: flex;
  flex-direction: column;
  height: 100vh;
  overflow: hidden;
  background: #f4f4f4;
  font-family: "Liberation Sans", Arial, sans-serif;
}

.menubar {
  position: relative;
  z-index: 3;
  display: flex;
  align-items: center;
  justify-content: space-between;
  height: 36px;
  padding: 0 34px 0 32px;
  border-bottom: 1px solid #3c3d42;
  background: #f7f7f7;
  color: #3f3f3f;
  font-size: 23px;
  line-height: 34px;
}

.menus {
  display: flex;
  align-items: center;
  gap: 31px;
}

.app-name {
  font-weight: 700;
}

.status {
  display: flex;
  align-items: center;
  gap: 20px;
}

.battery {
  display: flex;
  align-items: center;
  gap: 8px;
}

.percent {
  font-size: 20px;
}

.clock {
  padding-right: 10px;
}

.stage {
  position: relative;
  display: flex;
  flex: 1;
  min-height: 0;
  padding: 0 38px 2px 3px;
}

.window {
  position: relative;
  display: flex;
  flex: 1;
  flex-direction: column;
  min-width: 0;
  overflow: hidden;
  border-radius: 8px 8px 10px 10px;
  box-shadow: 0 0 0 1px #8a8a8c, 0 20px 44px #0009;
}

.back-window {
  position: absolute;
  top: 1px;
  right: 9px;
  bottom: 7px;
  display: flex;
  flex-direction: column;
  width: 90px;
  padding-left: 61px;
  overflow: hidden;
  border-radius: 8px;
  background: #e4e4e4;
  box-shadow: 0 0 0 1px #a0a0a0, 0 20px 44px #0008;
}

.back-toolbar {
  height: 62px;
  padding-top: 13px;
  border-bottom: 1px solid #b8b8b8;
  background: linear-gradient(#f4f4f4, #d8d8d8);
}

.back-toolbar i {
  display: block;
  width: 8px;
  height: 34px;
  border: 1px solid #c4c4c4;
  border-left: 0;
  border-radius: 0 6px 6px 0;
}

.back-tabs {
  height: 37px;
  padding-top: 6px;
  border-bottom: 1px solid #b4b4b4;
  background: #cfcfcf;
}

.back-tabs svg {
  margin-left: -4px;
}

.back-page {
  height: 97px;
  border-bottom: 2px solid #b0b0b0;
  background: linear-gradient(90deg, #d8d8d8, #ededed);
}

.back-bar {
  height: 57px;
  border-bottom: 1px solid #b4b4b4;
  background: linear-gradient(90deg, #c4c4c4, #dcdcdc);
}

.back-bar.short {
  height: 22px;
}

.back-body {
  flex: 1;
  padding: 216px 2px 0 0;
  background: linear-gradient(90deg, #bababa, #d6d6d6);
}

.back-body i {
  display: block;
  width: 14px;
  height: 72px;
  margin-left: auto;
  border: 1px solid #929292;
  background: #a2a2a2;
}

.toolbar {
  display: flex;
  flex: none;
  align-items: flex-start;
  height: 63px;
  padding: 14px 0 0 21px;
  border-bottom: 1px solid #b2b2b2;
  background: linear-gradient(#ebebeb, #d3d3d3);
}

.lights {
  display: flex;
  align-items: center;
  gap: 13px;
  height: 34px;
}

.light {
  width: 19px;
  height: 19px;
  border: 1px solid #0002;
  border-radius: 50%;
}

.red {
  background: #fc5753;
}

.amber {
  background: #fdbc40;
}

.green {
  background: #2ac940;
}

.history {
  display: flex;
  gap: 2px;
  margin: 0 13px 0 21px;
}

.tool {
  display: grid;
  place-items: center;
  width: 59px;
  height: 34px;
  border-radius: 6px;
  background: #fcfcfc;
  box-shadow: 0 1px 1px #0004;
}

.narrow {
  width: 41px;
}

.address {
  display: flex;
  flex: 1;
  align-items: center;
  max-width: 823px;
  height: 34px;
  margin: 0 auto;
  padding-right: 10px;
  border-radius: 6px;
  background: #fcfcfc;
  box-shadow: 0 1px 1px #0004;
}

.url {
  display: flex;
  flex: 1;
  align-items: center;
  justify-content: center;
  gap: 7px;
  padding-left: 32px;
}

.url a {
  color: #111;
  font-size: 21px;
  line-height: 34px;
  text-decoration: none;
}

.actions {
  display: flex;
  gap: 13px;
  margin: 0 20px 0 18px;
}

.new-tab {
  display: grid;
  place-items: center;
  align-self: flex-end;
  width: 39px;
  height: 39px;
  border: 1px solid #8f8f8f;
  border-width: 2px 0 0 2px;
  background: #c6c6c6;
}

.app-header {
  display: grid;
  flex: none;
  grid-template-columns: 96px 320px 1fr 367px 367px 261px 100px;
  height: 96px;
  background: #fff;
  font-family: Lato, "Open Sans", sans-serif;
}

.cell {
  display: flex;
  align-items: center;
  border-right: 1px solid #dcdcdc;
}

.cell:last-child {
  border-right: 0;
}

.burger {
  flex-direction: column;
  justify-content: center;
  gap: 7px;
}

.burger i {
  width: 26px;
  height: 3px;
  background: #111;
}

.brand {
  justify-content: center;
  color: #222;
  font-family: "DejaVu Sans", sans-serif;
  font-size: 48px;
  text-decoration: none;
}

.product {
  padding: 6px 0 0 16px;
}

.product button {
  width: 103px;
  height: 54px;
  padding-bottom: 6px;
  border-radius: 5px;
  background: #060606;
  color: #fff;
  font-size: 21px;
}

.user,
.profile,
.timer {
  gap: 26px;
  color: #82858f;
  font-size: 27px;
  line-height: 32px;
}

.user {
  padding-left: 19px;
}

.user span {
  padding-bottom: 2px;
}

.profile {
  gap: 30px;
  padding-left: 28px;
  color: #8e909a;
  font-size: 26px;
  font-weight: 300;
}

.profile span {
  padding-bottom: 10px;
}

.timer {
  padding-left: 26px;
  color: #aab4c2;
  font-size: 26px;
  font-weight: 300;
}

.timer span {
  padding-bottom: 2px;
}

.sensors {
  justify-content: center;
}

.page {
  flex: 1;
  min-height: 0;
  padding: 0 66px;
  overflow: hidden;
  background: radial-gradient(ellipse 60% 90% at 50% 40%, #dfdce2, #dbdae0 60%, #d0d3dc);
}

.crumbs {
  display: flex;
  align-items: center;
  gap: 22px;
  height: 120px;
  padding-bottom: 2px;
}

.crumbs h1 {
  margin: 0 0 0 -8px;
  padding-bottom: 2px;
  color: #687085;
  font-family: Lato, "Open Sans", sans-serif;
  font-size: 24px;
  font-weight: 300;
  line-height: 32px;
}

.panel {
  background: #b3a9b6;
}

.panel h2 {
  margin: 0;
  padding: 0 48px 6px;
  background: #8a8b95;
  color: #fff;
  font-family: Lato, "Open Sans", sans-serif;
  font-size: 27px;
  font-weight: 300;
  line-height: 90px;
}

.charts {
  position: relative;
}

.chart {
  width: 100%;
  height: auto;
}

.label text {
  fill: #fff;
  font-family: "Noto Sans", "Open Sans", sans-serif;
  font-size: 19px;
  font-weight: 500;
}

.tooltip {
  position: absolute;
  top: 208px;
  left: 208px;
  display: flex;
  flex-direction: column;
  padding: 15px 9px 5px 12px;
  border-radius: 3px;
  background: #000000d9;
  box-shadow: 1px 1px 4px #0009;
  font-family: "Noto Sans", "Open Sans", sans-serif;
  font-size: 20px;
  font-weight: 500;
  line-height: 26px;
  white-space: nowrap;
}

.tooltip strong {
  color: #fff;
  font-size: 18px;
  font-weight: 500;
  line-height: 24px;
}

.defs {
  position: absolute;
}

.dock {
  position: relative;
  z-index: 2;
  display: flex;
  align-self: center;
  height: 81px;
  padding: 3px 4px 0;
  border-top: 1px solid #aaa;
  border-radius: 8px 8px 0 0;
  background: linear-gradient(#c4c1c4, #d9d9d9);
}

.dock-item {
  position: relative;
  width: 68px;
}

.dock-item svg {
  margin-bottom: 9px;
}

.badge {
  position: absolute;
  top: 0;
  right: 0;
  width: 25px;
  height: 25px;
  border-radius: 50%;
  background: #fb453e;
  box-shadow: 0 1px 2px #0006;
  color: #fff;
  font-size: 14px;
  line-height: 25px;
  text-align: center;
}

.dot {
  position: absolute;
  bottom: 3px;
  left: 31px;
  width: 7px;
  height: 7px;
  border-radius: 50%;
  background: #4a4a4a;
}

.divider {
  width: 2px;
  height: 60px;
  margin: 10px 14px 0;
  background: #969696;
}
</style>
